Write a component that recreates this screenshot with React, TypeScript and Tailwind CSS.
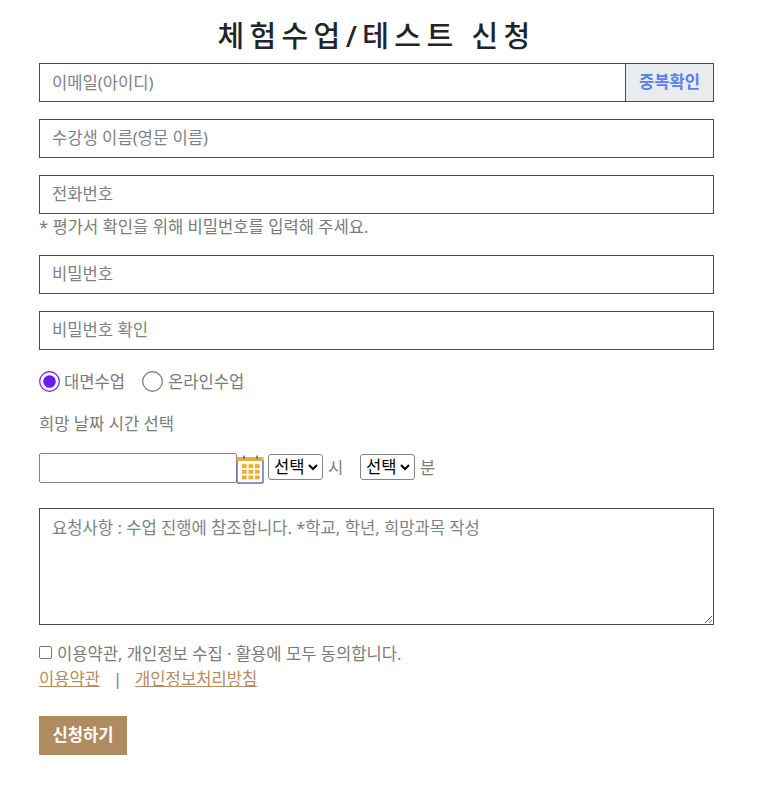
import React from "react";

const box = "w-full h-[39px] rounded-none border border-[#4c4c4c] bg-white px-3 text-[16.6px] placeholder:text-[#7b8389] outline-none";

function Radio({ checked }: { checked?: boolean }) {
  return (
    <svg className="block size-[21px]" viewBox="0 0 21 21" fill="none">
      <circle cx="10.5" cy="10.5" r="9.8" stroke={checked ? "#6a1bfa" : "#777"} strokeWidth="1.2" />
      {checked && <circle cx="10.5" cy="10.5" r="6.3" fill="#6a1bfa" />}
    </svg>
  );
}

function Pick() {
  return (
    <div className="flex h-[26px] w-[55px] items-center justify-between rounded-[3px] border border-[#858585] bg-white pl-[5px] pr-[4px] text-[16.6px] text-black">
      <span>선택</span>
      <svg className="size-[10px]" viewBox="0 0 10 10" fill="none">
        <path d="M1 3 L5 7 L9 3" stroke="#000" strokeWidth="2" />
      </svg>
    </div>
  );
}

function Calendar() {
  return (
    <svg className="block h-[31px] w-[28px]" viewBox="0 0 28 31">
      <path d="M1 7V29Q1 30 2 30H26Q27 30 27 29V7" fill="#fff" stroke="#7369c9" strokeWidth="1.5" />
      <path d="M1.5 4H26.5Q27.5 4 27.5 5V8H.5V5Q.5 4 1.5 4Z" fill="#e9ad35" />
      <path d="M8 2.5V6M21 2.5V6" stroke="#74618c" strokeWidth="1.6" />
      <rect x="4.5" y="10" width="19.5" height="18" fill="#fff6dc" />
      {[11.2, 17, 22.6].map((y) => [6, 12.5, 19].map((x) => <rect key={`${x}-${y}`} x={x} y={y} width="4.6" height="3.7" fill="#eaae32" />))}
    </svg>
  );
}

export default function App() {
  return (
    <div className="h-[789px] w-[760px] bg-white pl-[39px] pr-[46px] pt-[15px] font-['Noto_Sans','Noto_Sans_CJK_KR',sans-serif] text-[16.6px] leading-6 text-[#7b7b7b]">
      <h1 className="h-[48px] text-center text-[29px] font-medium leading-[42px] tracking-[5.4px] text-[#212529]">체험수업/테스트 신청</h1>
      <div className="flex h-[39px]">
        <input className={`${box} pb-px`} placeholder="이메일(아이디)" />
        <button className="-ml-px w-[89px] shrink-0 border border-[#4c4c4c] bg-[#e9ecef] pb-px font-bold text-[#5a80ee]">중복확인</button>
      </div>
      <input className={`${box} mt-[17px] block pb-[3px]`} placeholder="수강생 이름(영문 이름)" />
      <input className={`${box} mt-[17px] block pb-[3px]`} placeholder="전화번호" />
      <p className="h-[41px] leading-[26px]">* 평가서 확인을 위해 비밀번호를 입력해 주세요.</p>
      <input className={`${box} block pb-[3px]`} placeholder="비밀번호" />
      <input className={`${box} mt-[17px] block pb-[3px]`} placeholder="비밀번호 확인" />
      <div className="mt-[20px] flex h-[22px] items-center leading-[26px]">
        <Radio checked />
        <span className="ml-[4px] w-[78px] pt-0.5">대면수업</span>
        <Radio />
        <span className="ml-[5px] pt-0.5">온라인수업</span>
      </div>
      <p className="mt-[18px] h-6 leading-[27px]">희망 날짜 시간 선택</p>
      <div className="mt-[19px] flex h-[31px] items-start">
        <div className="h-[30px] w-[198px] rounded-[2px] border border-[#858585]" />
        <div className="-ml-px"><Calendar /></div>
        <div className="ml-[4px] mt-px"><Pick /></div>
        <span className="ml-[5px] mt-[3px] w-[32px]">시</span>
        <div className="mt-px"><Pick /></div>
        <span className="ml-[5px] mt-[3px]">분</span>
      </div>
      <textarea className="mt-[24px] block h-[117px] w-full resize border border-[#4c4c4c] px-3 pb-1.5 pt-[7px] placeholder:text-[#7b8389] outline-none" placeholder="요청사항 : 수업 진행에 참조합니다. *학교, 학년, 희망과목 작성" />
      <div className="mt-[15px] flex h-[25px] items-center">
        <span className="size-[13px] rounded-[2px] border border-[#767676]" />
        <span className="ml-[5px] pt-0.5">이용약관, 개인정보 수집 · 활용에 모두 동의합니다.</span>
      </div>
      <div className="flex h-[25px] leading-[28px] text-[#b48d60]">
        <a className="underline" href="#">이용약관</a>
        <span className="w-[35px] text-center text-[#7b7b7b]">|</span>
        <a className="underline" href="#">개인정보처리방침</a>
      </div>
      <button className="mt-[26px] h-[39px] w-[88px] bg-[#b18b60] pb-px font-bold text-white">신청하기</button>
    </div>
  );
}
